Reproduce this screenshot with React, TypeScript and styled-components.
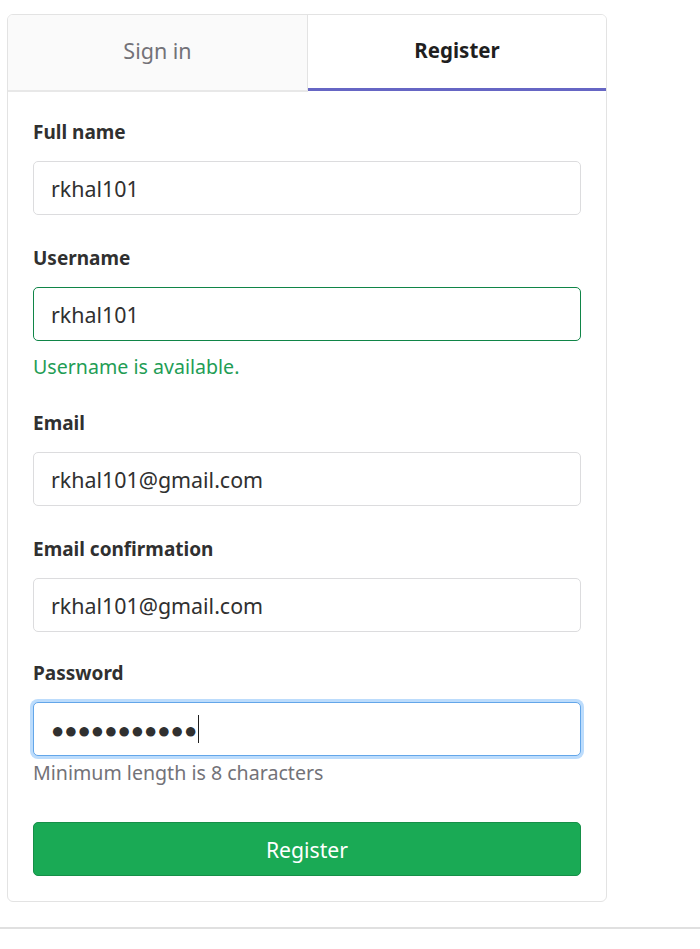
import styled, { createGlobalStyle } from "styled-components";

const GlobalStyle = createGlobalStyle`
  html, body {
    margin: 0;
    padding: 0;
    background: #ffffff;
  }
  body {
    font-family: "Noto Sans", "Open Sans", sans-serif;
    color: #303030;
  }
`;

const Page = styled.div`
  display: flex;
  flex-direction: column;
  width: 700px;
  height: 949px;
  padding-top: 14px;
  box-sizing: border-box;
`;

const Card = styled.div`
  width: 600px;
  margin-left: 7px;
  box-sizing: border-box;
  border: 1px solid #e3e3e3;
  border-radius: 6px;
  overflow: hidden;
  background: #ffffff;
`;

const Tabs = styled.div`
  display: grid;
  grid-template-columns: 300px 1fr;
  height: 77px;
`;

const Tab = styled.div<{ $active?: boolean }>`
  display: flex;
  align-items: center;
  justify-content: center;
  box-sizing: border-box;
  padding-bottom: ${(p) => (p.$active ? "3px" : "5px")};
  font-size: ${(p) => (p.$active ? "20.5px" : "21.5px")};
  background: ${(p) => (p.$active ? "#ffffff" : "#fafafa")};
  color: ${(p) => (p.$active ? "#1f1f1f" : "#737278")};
  font-weight: ${(p) => (p.$active ? 700 : 400)};
  border-right: ${(p) => (p.$active ? "none" : "1px solid #e3e3e3")};
  border-bottom: ${(p) => (p.$active ? "3px solid #6666c4" : "2px solid #e8e8e8")};
  margin-bottom: ${(p) => (p.$active ? "1px" : "0")};
`;

const Form = styled.form`
  display: flex;
  flex-direction: column;
  padding: 28px 25px 25px 25px;
`;

const Field = styled.div<{ $gap?: number }>`
  display: flex;
  flex-direction: column;
  margin-bottom: ${(p) => p.$gap ?? 31}px;
`;

const Label = styled.label`
  font-size: 19px;
  font-weight: 700;
  line-height: 24px;
  color: #303030;
  margin-bottom: 17px;
`;

const Input = styled.div<{ $state?: "ok" | "focus" }>`
  display: flex;
  align-items: center;
  height: 54px;
  box-sizing: border-box;
  padding: 0 17px;
  border-radius: 5px;
  font-size: 21.4px;
  color: #303030;
  background: #ffffff;
  border: 1px solid
    ${(p) =>
      p.$state === "ok" ? "#108548" : p.$state === "focus" ? "#63a6e9" : "#dcdcde"};
  box-shadow: ${(p) =>
    p.$state === "focus" ? "0 0 0 3px #bcdcfc" : "none"};
`;

const Dots = styled.span`
  font-size: 22px;
  letter-spacing: 0;
  color: #303030;
`;

const Caret = styled.span`
  display: inline-block;
  width: 1px;
  height: 28px;
  background: #1f1f1f;
  margin-left: 1px;
`;

const Help = styled.div<{ $ok?: boolean }>`
  font-size: 19.6px;
  line-height: 24px;
  color: ${(p) => (p.$ok ? "#1f9d55" : "#737278")};
  margin-top: ${(p) => (p.$ok ? 14 : 5)}px;
`;

const SubmitButton = styled.button`
  height: 54px;
  border: 1px solid #168f48;
  border-radius: 5px;
  background: #1aaa55;
  color: #ffffff;
  font-family: inherit;
  font-size: 21.2px;
  cursor: pointer;
`;

const Rule = styled.div`
  margin-top: 25px;
  height: 2px;
  background: #e0e0e0;
`;

const App = () => {
  return (
    <>
      <GlobalStyle />
      <Page>
        <Card>
          <Tabs>
            <Tab>Sign in</Tab>
            <Tab $active>Register</Tab>
          </Tabs>
          <Form onSubmit={(e) => e.preventDefault()}>
            <Field>
              <Label>Full name</Label>
              <Input>rkhal101</Input>
            </Field>
            <Field $gap={32}>
              <Label>Username</Label>
              <Input $state="ok">rkhal101</Input>
              <Help $ok>Username is available.</Help>
            </Field>
            <Field>
              <Label>Email</Label>
              <Input>rkhal101@gmail.com</Input>
            </Field>
            <Field $gap={29}>
              <Label>Email confirmation</Label>
              <Input>rkhal101@gmail.com</Input>
            </Field>
            <Field $gap={37}>
              <Label>Password</Label>
              <Input $state="focus">
                <Dots>●●●●●●●●●●●</Dots>
                <Caret />
              </Input>
              <Help>Minimum length is 8 characters</Help>
            </Field>
            <SubmitButton type="submit">Register</SubmitButton>
          </Form>
        </Card>
        <Rule />
      </Page>
    </>
  );
};

export default App;
